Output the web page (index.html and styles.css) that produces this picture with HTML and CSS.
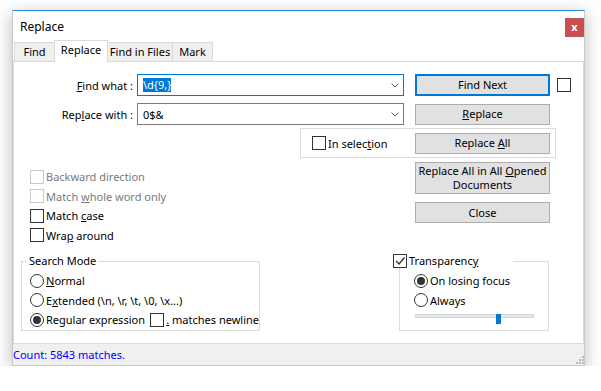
FILE: index.html
```html
<!DOCTYPE html>
<html lang="en">
<head>
  <meta charset="UTF-8" />
  <meta name="viewport" content="width=device-width, initial-scale=1.0"/>
  <title>Replace</title>
  <link rel="stylesheet" href="styles.css">
</head>
<body>

  <div class="window">
    <!-- TITLE BAR -->
    <div class="titlebar">
      <span class="title">Replace</span>
      <span class="close-btn">x</span>
    </div>

    <!-- TABS -->
    <div class="tabs">
      <div class="tab">Find</div>
      <div class="tab active">Replace</div>
      <div class="tab">Find in Files</div>
      <div class="tab">Mark</div>
    </div>

    <div class="panel">
      <div class="field-row first">
        <label class="field-label"><u>F</u>ind what :</label>
        <div class="combo focused">
          <span class="selected-text">\d{9,}</span>
          <svg class="chevron" width="8" height="5" viewBox="0 0 8 5"><path d="M0.5 0.5 L4 4 L7.5 0.5" fill="none" stroke="#606060" stroke-width="1"/></svg>
        </div>
        <button class="btn default">Find Next</button>
        <span class="check side-check"></span>
      </div>

      <div class="field-row">
        <label class="field-label">Rep<u>l</u>ace with :</label>
        <div class="combo">
          <span class="combo-text">0$&amp;</span>
          <svg class="chevron" width="8" height="5" viewBox="0 0 8 5"><path d="M0.5 0.5 L4 4 L7.5 0.5" fill="none" stroke="#606060" stroke-width="1"/></svg>
        </div>
        <button class="btn"><u>R</u>eplace</button>
      </div>

      <div class="selection-box">
        <label class="opt selection-opt"><span class="check"></span><span>In selec<u>t</u>ion</span></label>
        <button class="btn">Replace <u>A</u>ll</button>
      </div>

      <div class="middle">
        <div class="options">
          <label class="opt disabled"><span class="check"></span><span>Backward direction</span></label>
          <label class="opt disabled"><span class="check"></span><span>Match <u>w</u>hole word only</span></label>
          <label class="opt"><span class="check"></span><span>Match <u>c</u>ase</span></label>
          <label class="opt"><span class="check"></span><span>Wra<u>p</u> around</span></label>
        </div>
        <div class="more-buttons">
          <button class="btn tall">Replace All in All <u>O</u>pened<br>Documents</button>
          <button class="btn close">Close</button>
        </div>
      </div>

      <div class="bottom">
        <fieldset class="group search-mode">
          <legend>Search Mode</legend>
          <label class="opt"><span class="radio"></span><span><u>N</u>ormal</span></label>
          <label class="opt"><span class="radio"></span><span>E<u>x</u>tended (\n, \r, \t, \0, \x...)</span></label>
          <div class="opt-line">
            <label class="opt regex"><span class="radio on"></span><span>Re<u>g</u>ular expression</span></label>
            <label class="opt"><span class="check"></span><span><u>.</u> matches newline</span></label>
          </div>
        </fieldset>

        <fieldset class="group transparency">
          <legend>
            <label class="opt"><span class="check checked">
              <svg width="12" height="12" viewBox="0 0 12 12"><path d="M2 6 L5 9 L10.5 2.5" fill="none" stroke="#333" stroke-width="1.3"/></svg>
            </span><span>Transparenc<u>y</u></span></label>
          </legend>
          <label class="opt"><span class="radio on"></span><span>On losing focus</span></label>
          <label class="opt"><span class="radio"></span><span>Always</span></label>
          <div class="slider">
            <div class="track"></div>
            <div class="thumb" style="left: 81px;"></div>
          </div>
        </fieldset>
      </div>
    </div>

    <!-- STATUS BAR -->
    <div class="statusbar">
      <span class="count">Count: 5843 matches.</span>
      <svg class="grip" width="8" height="8" viewBox="0 0 8 8">
        <rect x="6" y="0" width="2" height="2" fill="#b8b8b8"/>
        <rect x="3" y="3" width="2" height="2" fill="#b8b8b8"/>
        <rect x="6" y="3" width="2" height="2" fill="#b8b8b8"/>
        <rect x="0" y="6" width="2" height="2" fill="#b8b8b8"/>
        <rect x="3" y="6" width="2" height="2" fill="#b8b8b8"/>
        <rect x="6" y="6" width="2" height="2" fill="#b8b8b8"/>
      </svg>
    </div>
  </div>

</body>
</html>
```

FILE: styles.css
```css
body {
  margin: 0;
  background-color: #fff;
  font-family: 'Noto Sans', 'Liberation Sans', sans-serif;
  font-size: 11px;
  color: #000;
}

.window {
  margin: 10px 0 0 12px;
  width: 573px;
  height: 356px;
  box-sizing: border-box;
  border: 1px solid #c9c9c9;
  border-top-color: #2b88d8;
  background-color: #fff;
  box-shadow: 0 4px 16px rgba(0, 0, 0, 0.28);
  display: flex;
  flex-direction: column;
}

/* title bar */
.titlebar {
  height: 30px;
  display: flex;
  align-items: center;
  justify-content: space-between;
}

.title {
  padding-left: 7px;
  font-size: 12px;
}

.close-btn {
  align-self: flex-start;
  margin-top: 7px;
  width: 19px;
  height: 19px;
  background-color: #c75050;
  color: #fff;
  font-weight: bold;
  font-size: 11px;
  line-height: 17px;
  text-align: center;
}

/* tabs */
.tabs {
  height: 20px;
  display: flex;
  align-items: flex-end;
  padding-left: 1px;
}

.tab {
  box-sizing: border-box;
  height: 19px;
  border: 1px solid #d9d9d9;
  border-bottom: none;
  margin-right: -1px;
  background-color: #f0f0f0;
  text-align: center;
  line-height: 17px;
  white-space: nowrap;
}

.tab:nth-child(1) { width: 41px; }
.tab:nth-child(2) { width: 54px; }
.tab:nth-child(3) { width: 66px; }
.tab:nth-child(4) { width: 41px; }

.tab.active {
  position: relative;
  z-index: 1;
  height: 22px;
  margin-bottom: -1px;
  background-color: #fff;
}

/* main panel */
.panel {
  flex: 1;
  border: 1px solid #d9d9d9;
  border-bottom: none;
}

.field-row {
  display: flex;
  align-items: center;
  height: 22px;
  margin-top: 7px;
}

.field-row.first {
  margin-top: 12px;
}

.field-label {
  width: 119px;
  padding-right: 4px;
  text-align: right;
}

.combo {
  box-sizing: border-box;
  width: 267px;
  height: 22px;
  border: 1px solid #7a7a7a;
  display: flex;
  align-items: center;
  justify-content: space-between;
  padding: 0 4px 0 5px;
}

.combo.focused {
  border-color: #0078d7;
}

.selected-text {
  background-color: #0078d7;
  color: #fff;
  line-height: 14px;
}

.btn {
  box-sizing: border-box;
  width: 135px;
  height: 21px;
  margin: 0 0 0 11px;
  padding: 0;
  border: 1px solid #adadad;
  background-color: #e1e1e1;
  font-family: inherit;
  font-size: 11px;
  color: #000;
  line-height: 14px;
}

.btn.default {
  height: 22px;
  border: 2px solid #0078d7;
}

.check {
  box-sizing: border-box;
  width: 14px;
  height: 14px;
  border: 1px solid #333;
  background-color: #fff;
  margin-right: 2px;
  flex-shrink: 0;
  display: flex;
  align-items: center;
  justify-content: center;
}

.side-check {
  margin-left: 7px;
}

.radio {
  box-sizing: border-box;
  width: 14px;
  height: 14px;
  border: 1px solid #333;
  border-radius: 50%;
  margin-right: 2px;
  flex-shrink: 0;
  display: flex;
  align-items: center;
  justify-content: center;
}

.radio.on::after {
  content: "";
  width: 8px;
  height: 8px;
  border-radius: 50%;
  background-color: #333;
}

.opt {
  display: flex;
  align-items: center;
  height: 19.5px;
  white-space: nowrap;
}

.opt.disabled {
  color: #7a7a7a;
}

.opt.disabled .check {
  border-color: #c8c8c8;
}

/* in selection group */
.selection-box {
  box-sizing: border-box;
  margin: 3px 0 0 286px;
  width: 256px;
  height: 30px;
  border: 1px solid #dcdcdc;
  display: flex;
  align-items: center;
  padding: 0 5px 0 11px;
}

.selection-opt {
  width: 103px;
}

.selection-box .btn {
  margin-left: 0;
}

/* options + extra buttons */
.middle {
  display: grid;
  grid-template-columns: 401px 135px;
}

.options {
  padding: 9px 0 0 16px;
}

.more-buttons {
  padding-top: 4px;
  display: flex;
  flex-direction: column;
}

.more-buttons .btn {
  margin-left: 0;
}

.btn.tall {
  height: 32px;
}

.btn.close {
  margin-top: 8px;
}

/* bottom groups */
.bottom {
  display: flex;
  align-items: flex-start;
  margin-top: 9px;
  padding-left: 7px;
}

.group {
  box-sizing: border-box;
  min-width: 0;
  margin: 0;
  border: 1px solid #dcdcdc;
  padding: 3px 0 0 8px;
}

.group legend {
  padding: 0 2px;
  margin-left: -3px;
  line-height: 14px;
}

.search-mode {
  width: 239px;
  height: 77px;
}

.opt-line {
  display: flex;
}

.regex {
  width: 122px;
}

.transparency {
  width: 150px;
  height: 77px;
  margin-left: 139px;
  padding-left: 14px;
}

.transparency legend {
  width: 120px;
  margin-left: -21px;
  padding: 0;
  background-color: #fff;
}

.transparency legend .opt {
  height: 14px;
}

.check.checked svg {
  display: block;
}

.slider {
  position: relative;
  width: 119px;
  height: 10px;
  margin: 3px 0 0 1px;
}

.track {
  margin-top: 4px;
  height: 4px;
  box-sizing: border-box;
  border: 1px solid #d6d6d6;
  background-color: #e7eaea;
}

.thumb {
  position: absolute;
  top: 0;
  width: 5px;
  height: 10px;
  background-color: #0078d7;
}

/* status bar */
.statusbar {
  height: 22px;
  box-sizing: border-box;
  border-top: 1px solid #d9d9d9;
  background-color: #f0f0f0;
  display: flex;
  align-items: center;
}

.count {
  color: #0000ff;
}

.grip {
  margin-left: auto;
  align-self: flex-end;
  margin-bottom: 1px;
}
```
